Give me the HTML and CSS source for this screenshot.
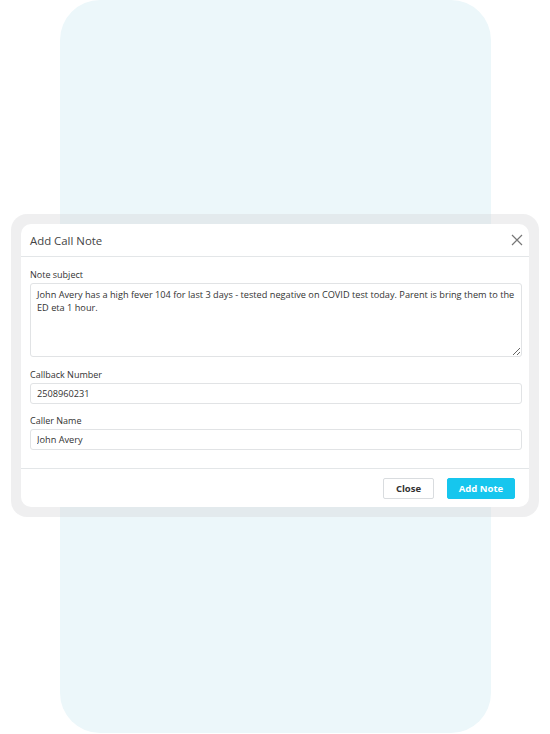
FILE: index.html
```
<!DOCTYPE html>
<html>
<head>
<meta charset="utf-8">
<link rel="stylesheet" href="styles.css">
</head>
<body>
<div class="stage">
  <div class="panel"></div>
  <div class="frame">
    <div class="card">
      <div class="header">
        <span class="title">Add Call Note</span>
        <svg class="close-x" width="12" height="12" viewBox="0 0 12 12"><path d="M1 1L11 11M11 1L1 11" stroke="#777" stroke-width="1.2" fill="none"/></svg>
      </div>
      <div class="body">
        <label class="label">Note subject</label>
        <textarea class="area">John Avery has a high fever 104 for last 3 days - tested negative on COVID test today. Parent is bring them to the ED eta 1 hour.</textarea>
        <label class="label gap">Callback Number</label>
        <input class="field" type="text" value="2508960231">
        <label class="label gap-sm">Caller Name</label>
        <input class="field" type="text" value="John Avery">
      </div>
      <div class="footer">
        <button class="btn btn-close">Close</button>
        <button class="btn btn-add">Add Note</button>
      </div>
    </div>
  </div>
</div>
</body>
</html>
```
FILE: styles.css
```
* { box-sizing: border-box; }
html, body { margin: 0; padding: 0; background: #fff; }
body { font-family: "Open Sans", "Liberation Sans", sans-serif; width: 550px; height: 734px; overflow: hidden; }
.stage { display: grid; width: 550px; height: 734px; }
.panel {
  grid-area: 1 / 1;
  margin-left: 60px;
  width: 431px;
  height: 733px;
  background: #ecf7fa;
  border-radius: 40px;
}
.frame {
  grid-area: 1 / 1;
  align-self: start;
  margin-top: 214px;
  margin-left: 11px;
  width: 528px;
  padding: 10px;
  border-radius: 16px;
  background: rgba(212, 214, 216, 0.38);
}
.card {
  background: #fff;
  border-radius: 10px;
  display: flex;
  flex-direction: column;
  height: 283px;
}
.header {
  height: 33px;
  flex: none;
  display: flex;
  align-items: center;
  justify-content: space-between;
  padding: 0 6px 0 9px;
  border-bottom: 1px solid #e3e6e8;
}
.title { font-size: 11.4px; color: #444; margin-top: 1px; }
.close-x { display: block; }
.body {
  flex: none;
  display: flex;
  flex-direction: column;
  padding: 11px 7px 18px 9px;
}
.label { font-size: 9px; line-height: 14px; color: #333; margin-bottom: 1px; }
.label.gap { margin-top: 11px; }
.label.gap-sm { margin-top: 10px; }
.area {
  display: block;
  width: 100%;
  height: 74px;
  border: 1px solid #e1e3e5;
  border-radius: 3px;
  padding: 4px 6px;
  font-family: "Open Sans", "Liberation Sans", sans-serif;
  font-size: 9.2px;
  line-height: 13px;
  color: #333;
  resize: vertical;
  outline: none;
}
.field {
  display: block;
  width: 100%;
  height: 21px;
  border: 1px solid #e1e3e5;
  border-radius: 3px;
  padding: 0 6px;
  font-family: "Open Sans", "Liberation Sans", sans-serif;
  font-size: 9.2px;
  color: #333;
  outline: none;
}
.footer {
  border-top: 1px solid #e3e6e8;
  flex: 1;
  display: flex;
  justify-content: flex-end;
  align-items: flex-start;
  gap: 13px;
  padding: 9px 14px 0 0;
}
.btn {
  height: 21px;
  border-radius: 2px;
  font-family: "Open Sans", "Liberation Sans", sans-serif;
  font-size: 9.5px;
  font-weight: 700;
  padding: 0;
  cursor: pointer;
}
.btn-close { width: 51px; background: #fff; border: 1px solid #d9dcdf; color: #333; }
.btn-add { width: 68px; background: #16c6ee; border: 1px solid #16c6ee; color: #fff; }
```
